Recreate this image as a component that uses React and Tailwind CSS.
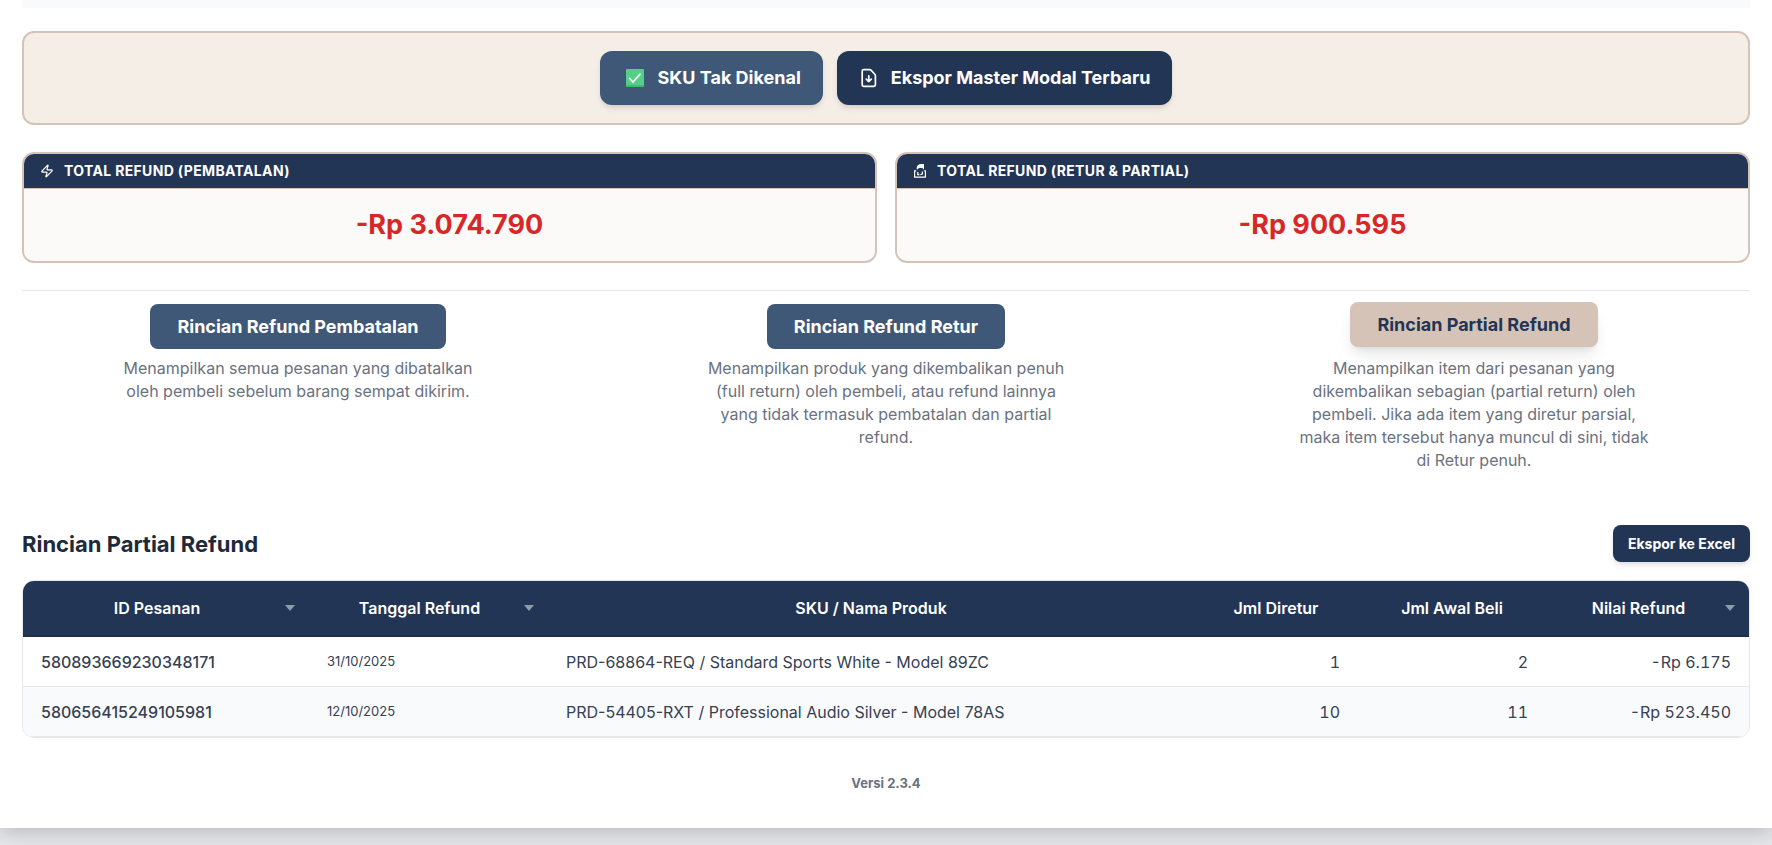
import { Zap } from 'lucide-react';

const tabs = [
  {
    label: 'Rincian Refund Pembatalan',
    description: 'Menampilkan semua pesanan yang dibatalkan oleh pembeli sebelum barang sempat dikirim.',
  },
  {
    label: 'Rincian Refund Retur',
    description:
      'Menampilkan produk yang dikembalikan penuh (full return) oleh pembeli, atau refund lainnya yang tidak termasuk pembatalan dan partial refund.',
  },
  {
    label: 'Rincian Partial Refund',
    description:
      'Menampilkan item dari pesanan yang dikembalikan sebagian (partial return) oleh pembeli. Jika ada item yang diretur parsial, maka item tersebut hanya muncul di sini, tidak di Retur penuh.',
    active: true,
  },
];

const columns = [
  { label: 'ID Pesanan', width: 'w-[286px]', sortable: true },
  { label: 'Tanggal Refund', width: 'w-[239px]', sortable: true },
  { label: 'SKU / Nama Produk', width: '' },
  { label: 'Jml Diretur', width: 'w-[164px]' },
  { label: 'Jml Awal Beli', width: 'w-[188px]' },
  { label: 'Nilai Refund', width: 'w-[203px]', sortable: true },
];

const rows = [
  {
    id: '580893669230348171',
    date: '31/10/2025',
    product: 'PRD-68864-REQ / Standard Sports White - Model 89ZC',
    returned: 1,
    bought: 2,
    refund: '-Rp 6.175',
  },
  {
    id: '580656415249105981',
    date: '12/10/2025',
    product: 'PRD-54405-RXT / Professional Audio Silver - Model 78AS',
    returned: 10,
    bought: 11,
    refund: '-Rp 523.450',
  },
];

const CheckBadge = () => (
  <svg className="w-6 h-5" viewBox="0 0 24 20" aria-hidden="true">
    <rect x="4" y="1" width="18" height="18" rx="1" fill="#52d088" />
    <path d="M4 17h18v1a1 1 0 0 1-1 1H5a1 1 0 0 1-1-1z" fill="#42b974" />
    <path d="M7 9.8l4 4.2 7.5-8.4" fill="none" stroke="#fff" strokeWidth="1.6" />
  </svg>
);

const DownloadIcon = () => (
  <svg className="w-5 h-5" viewBox="0 0 20 20" fill="none" stroke="currentColor" strokeWidth="1.7" strokeLinecap="round" strokeLinejoin="round" aria-hidden="true">
    <path d="M4.8 1.6h5.7c.6 0 1.1.2 1.5.6l3.6 3.8c.5.5.8 1.1.8 1.8v9c0 .9-.7 1.6-1.6 1.6h-10c-.9 0-1.6-.7-1.6-1.6V3.2c0-.9.7-1.6 1.6-1.6z" />
    <path d="M9.8 7.8v5.6M7.3 11.2l2.5 2.5 2.5-2.5" />
  </svg>
);

const ReturnIcon = () => (
  <svg className="w-3.5 h-3.5" viewBox="0 0 14 14" fill="none" stroke="currentColor" strokeWidth="1.2" aria-hidden="true">
    <path d="M4.2 5.2c0-2.6 1-4.6 3.6-4.6h2.6v2.8H7.2" fill="currentColor" />
    <path d="M10.4 3.2v2" />
    <path d="M3.2 6.8H1.6v6.4h10.8V6.8h-1.2M4.8 8v2.6h1.6M7.4 10.8l2-1V7.6" />
  </svg>
);

const SummaryCard = ({ icon, title, amount }) => (
  <section className="border-2 border-[#d6c3b7] rounded-xl bg-[#fcfaf8] overflow-hidden">
    <h2 className="flex items-center gap-2.5 h-[35px] px-4 bg-[#223555] border-b border-[#d6c3b7] text-white text-sm font-bold tracking-wide uppercase">
      {icon}
      {title}
    </h2>
    <p className="py-[18px] text-center text-[27px] leading-9 font-bold text-[#d62828]">{amount}</p>
  </section>
);

const App = () => {
  return (
    <div className="min-h-screen bg-gray-200 font-[Inter,sans-serif] text-gray-700">
      <main className="bg-white px-[22px] pb-[35px] shadow-[0_4px_20px_rgba(0,0,0,0.2)]">
        <div className="h-2 mb-[23px] bg-gray-50"></div>

        <div className="flex justify-center gap-3.5 p-[18px] mb-[27px] border-2 border-[#d6c3b7] rounded-xl bg-[#f5eee6]">
          <button type="button" className="flex items-center gap-3 h-[54px] px-[22px] rounded-xl bg-[#3f5877] text-white text-lg font-bold shadow-md">
            <CheckBadge />
            SKU Tak Dikenal
          </button>
          <button type="button" className="flex items-center gap-3 h-[54px] px-[22px] rounded-xl bg-[#223555] text-white text-lg font-bold shadow-md">
            <DownloadIcon />
            Ekspor Master Modal Terbaru
          </button>
        </div>

        <div className="grid grid-cols-2 gap-[18px] mb-[27px]">
          <SummaryCard icon={<Zap className="w-3.5 h-3.5" />} title="Total Refund (Pembatalan)" amount="-Rp 3.074.790" />
          <SummaryCard icon={<ReturnIcon />} title="Total Refund (Retur & Partial)" amount="-Rp 900.595" />
        </div>

        {/* Detail switcher */}
        <div className="grid grid-cols-3 gap-9 pt-[13px] mb-[53px] border-t border-gray-200">
          {tabs.map((tab) => (
            <div key={tab.label} className="flex flex-col items-center gap-2">
              <button
                type="button"
                className={
                  tab.active
                    ? 'h-[45px] px-[27px] rounded-lg text-lg font-bold bg-[#d6c3b7] text-[#223555] shadow-lg -translate-y-0.5'
                    : 'h-[45px] px-[27px] rounded-lg text-lg font-bold bg-[#3f5877] text-white'
                }
              >
                {tab.label}
              </button>
              <p className="max-w-[360px] text-center text-base leading-[23px] text-[#6b7280]">{tab.description}</p>
            </div>
          ))}
        </div>

        <div className="flex items-center justify-between mb-[18px]">
          <h2 className="text-[22px] leading-8 font-bold text-gray-800">Rincian Partial Refund</h2>
          <button type="button" className="h-[37px] px-[15px] rounded-lg bg-[#223555] text-white text-sm font-bold shadow-md">
            Ekspor ke Excel
          </button>
        </div>

        <div className="border border-gray-200 rounded-xl overflow-hidden">
          <table className="w-full table-fixed border-separate border-spacing-0">
            <thead className="bg-[#223555] text-white">
              <tr>
                {columns.map((col) => (
                  <th
                    key={col.label}
                    className={`relative h-14 pl-[18px] border-b-2 border-[#1e2f4d] text-base font-semibold ${col.width} ${col.sortable ? 'pr-9' : 'pr-[18px]'}`}
                  >
                    {col.label}
                    {col.sortable && (
                      <svg className="absolute right-3.5 top-1/2 -translate-y-1/2 w-2.5 h-1.5" viewBox="0 0 10 6" aria-hidden="true">
                        <path d="M0 0h10L5 6z" fill="#909aaa" />
                      </svg>
                    )}
                  </th>
                ))}
              </tr>
            </thead>
            <tbody>
              {rows.map((row) => (
                <tr key={row.id} className="h-[50px] even:bg-gray-50 text-base">
                  <td className="px-[18px] border-b border-gray-200 font-medium">{row.id}</td>
                  <td className="px-[18px] border-b border-gray-200 text-[13px]">{row.date}</td>
                  <td className="px-[18px] border-b border-gray-200">{row.product}</td>
                  <td className="px-[18px] border-b border-gray-200 text-right tabular-nums">{row.returned}</td>
                  <td className="px-[18px] border-b border-gray-200 text-right tabular-nums">{row.bought}</td>
                  <td className="px-[18px] border-b border-gray-200 text-right tabular-nums">{row.refund}</td>
                </tr>
              ))}
            </tbody>
          </table>
        </div>

        <footer className="mt-[35px] text-center text-[13px] leading-5 font-bold text-[#6b7280]">Versi 2.3.4</footer>
      </main>
    </div>
  );
};

export default App;
